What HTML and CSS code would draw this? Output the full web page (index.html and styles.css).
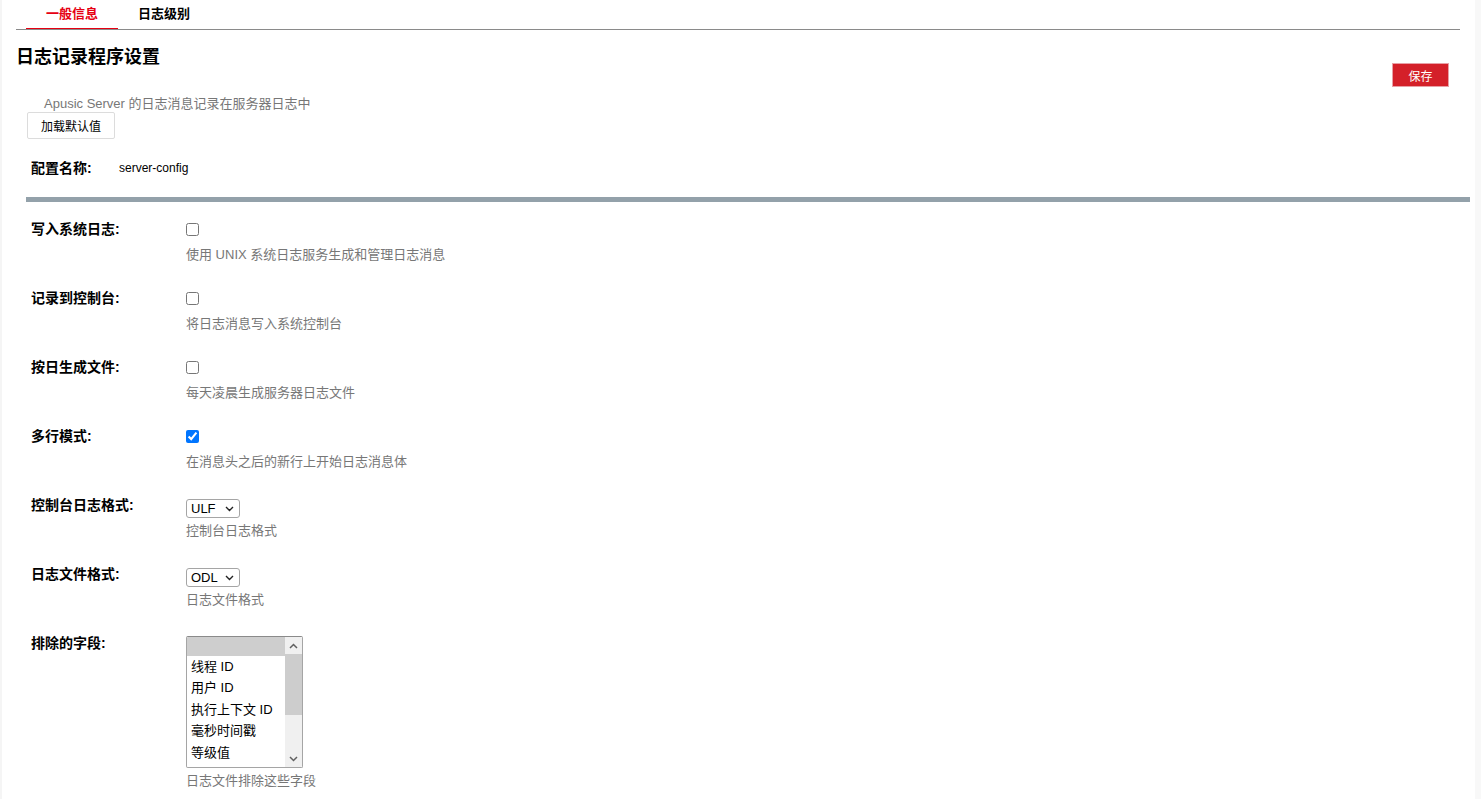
FILE: index.html
```html
<!DOCTYPE html>
<html lang="zh-CN">
<head>
    <meta charset="UTF-8">
    <meta name="viewport" content="width=device-width, initial-scale=1.0">
    <title>日志记录程序设置</title>
    <link rel="stylesheet" href="styles.css">
</head>
<body>
    <div class="page">
        <ul class="tabs">
            <li class="tab active">一般信息</li>
            <li class="tab">日志级别</li>
        </ul>

        <div class="page-head">
            <h1 class="page-title">日志记录程序设置</h1>
            <button class="btn-save">保存</button>
        </div>

        <p class="page-desc">Apusic Server 的日志消息记录在服务器日志中</p>
        <button class="btn-default">加载默认值</button>

        <div class="config-name">
            <span class="config-label">配置名称:</span>
            <span class="config-value">server-config</span>
        </div>

        <div class="section-line"></div>

        <div class="fields">
            <div class="field">
                <label class="field-label">写入系统日志:</label>
                <div class="field-body">
                    <div class="control"><input type="checkbox"></div>
                    <div class="help">使用 UNIX 系统日志服务生成和管理日志消息</div>
                </div>
            </div>

            <div class="field">
                <label class="field-label">记录到控制台:</label>
                <div class="field-body">
                    <div class="control"><input type="checkbox"></div>
                    <div class="help">将日志消息写入系统控制台</div>
                </div>
            </div>

            <div class="field">
                <label class="field-label">按日生成文件:</label>
                <div class="field-body">
                    <div class="control"><input type="checkbox"></div>
                    <div class="help">每天凌晨生成服务器日志文件</div>
                </div>
            </div>

            <div class="field">
                <label class="field-label">多行模式:</label>
                <div class="field-body">
                    <div class="control"><input type="checkbox" checked></div>
                    <div class="help">在消息头之后的新行上开始日志消息体</div>
                </div>
            </div>

            <div class="field field-select">
                <label class="field-label">控制台日志格式:</label>
                <div class="field-body">
                    <div class="select-wrap">
                        <select class="small-select">
                            <option>ULF</option>
                            <option>ODL</option>
                        </select>
                        <svg class="select-arrow" width="9" height="6" viewBox="0 0 9 6"><path d="M1 1 L4.5 4.5 L8 1" fill="none" stroke="#222" stroke-width="1.4"/></svg>
                    </div>
                    <div class="help">控制台日志格式</div>
                </div>
            </div>

            <div class="field field-select">
                <label class="field-label">日志文件格式:</label>
                <div class="field-body">
                    <div class="select-wrap">
                        <select class="small-select">
                            <option>ODL</option>
                            <option>ULF</option>
                        </select>
                        <svg class="select-arrow" width="9" height="6" viewBox="0 0 9 6"><path d="M1 1 L4.5 4.5 L8 1" fill="none" stroke="#222" stroke-width="1.4"/></svg>
                    </div>
                    <div class="help">日志文件格式</div>
                </div>
            </div>

            <div class="field field-select">
                <label class="field-label">排除的字段:</label>
                <div class="field-body">
                    <div class="listbox">
                        <ul class="listbox-items">
                            <li class="selected"></li>
                            <li>线程 ID</li>
                            <li>用户 ID</li>
                            <li>执行上下文 ID</li>
                            <li>毫秒时间戳</li>
                            <li>等级值</li>
                            <li>日志记录器名称</li>
                        </ul>
                        <div class="scrollbar">
                            <span class="sb-btn">
                                <svg width="9" height="6" viewBox="0 0 9 6"><path d="M1 5 L4.5 1.5 L8 5" fill="none" stroke="#606060" stroke-width="1.5"/></svg>
                            </span>
                            <span class="sb-thumb"></span>
                            <span class="sb-track"></span>
                            <span class="sb-btn">
                                <svg width="9" height="6" viewBox="0 0 9 6"><path d="M1 1 L4.5 4.5 L8 1" fill="none" stroke="#606060" stroke-width="1.5"/></svg>
                            </span>
                        </div>
                    </div>
                    <div class="help">日志文件排除这些字段</div>
                </div>
            </div>
        </div>
    </div>
</body>
</html>
```

FILE: styles.css
```css
* {
    margin: 0;
    padding: 0;
    box-sizing: border-box;
}

body {
    font-family: "Liberation Sans", "Noto Sans CJK SC", sans-serif;
    font-size: 13px;
    color: #000;
    background: #f8f8f8;
    min-height: 100vh;
}

.page {
    background: #fff;
    margin-right: 6px;
    border-left: 2px solid #f5f5f5;
    min-height: 100vh;
}

/* onglets */
.tabs {
    list-style: none;
    display: flex;
    margin: 0 15px 0 14px;
    padding-left: 10px;
    height: 30px;
    border-bottom: 1px solid #8a8a8a;
}

.tab {
    padding: 0 20px;
    line-height: 28px;
    font-weight: bold;
    font-size: 13px;
    color: #000;
    cursor: pointer;
}

.tab.active {
    color: #e60012;
    border-bottom: 1px solid #e60012;
}

/* en-tête */
.page-head {
    display: flex;
    justify-content: space-between;
    align-items: flex-start;
    margin-top: 15px;
    padding: 0 26px 0 14px;
}

.page-title {
    font-size: 18px;
    font-weight: bold;
    line-height: 24px;
}

.btn-save {
    margin-top: 18px;
    width: 57px;
    height: 24px;
    background: #d42029;
    color: #fff;
    border: 1px solid #e8a0a6;
    font-family: inherit;
    font-size: 12px;
    cursor: pointer;
}

.page-desc {
    margin: 9px 0 0 42px;
    line-height: 16px;
    color: #777;
}

.btn-default {
    margin-left: 25px;
    height: 27px;
    padding: 0 13px;
    background: #fff;
    border: 1px solid #dcdcdc;
    border-radius: 2px;
    font-family: inherit;
    font-size: 12px;
    color: #000;
    cursor: pointer;
}

.config-name {
    display: flex;
    margin: 21px 0 0 29px;
    line-height: 17px;
}

.config-label {
    width: 88px;
    font-size: 14px;
    font-weight: bold;
}

.config-value {
    font-size: 12px;
}

.section-line {
    height: 5px;
    margin: 20px 5px 0 24px;
    background: #93a1aa;
}

/* champs */
.field {
    display: flex;
    padding: 19px 0 8px 29px;
}

.field-label {
    width: 155px;
    flex-shrink: 0;
    font-size: 14px;
    font-weight: bold;
    line-height: 16px;
}

.field-body {
    display: flex;
    flex-direction: column;
    align-items: flex-start;
}

.control {
    height: 16px;
    display: flex;
    align-items: center;
}

.control input {
    margin: 0;
    width: 13px;
    height: 13px;
}

.help {
    color: #777;
    line-height: 16px;
    margin-top: 10px;
}

.field-select .help {
    margin-top: 5px;
}

/* listes déroulantes */
.select-wrap {
    position: relative;
    margin-top: 2px;
}

.small-select {
    appearance: none;
    display: block;
    width: 54px;
    height: 19px;
    padding-left: 4px;
    font-family: inherit;
    font-size: 13px;
    color: #000;
    border: 1px solid #a5a5a5;
    border-radius: 3px;
    background: #fff;
}

.select-arrow {
    position: absolute;
    right: 6px;
    top: 7px;
    pointer-events: none;
}

/* liste multiple */
.listbox {
    display: flex;
    margin-top: 1px;
    width: 117px;
    height: 132px;
    border: 1px solid #a5a5a5;
    border-top-color: #8a8a8a;
    border-radius: 2px;
    overflow: hidden;
    background: #fff;
}

.listbox-items {
    list-style: none;
    flex: 1;
    margin-top: -3px;
}

.listbox-items li {
    height: 21.5px;
    line-height: 21.5px;
    padding-left: 4px;
    font-size: 13px;
    white-space: nowrap;
}

.listbox-items li.selected {
    background: #cecece;
}

.scrollbar {
    width: 17px;
    display: flex;
    flex-direction: column;
    background: #f0f0f0;
}

.sb-btn {
    height: 17px;
    display: flex;
    align-items: center;
    justify-content: center;
}

.sb-thumb {
    height: 61px;
    background: #cdcdcd;
}

.sb-track {
    flex: 1;
}
```
